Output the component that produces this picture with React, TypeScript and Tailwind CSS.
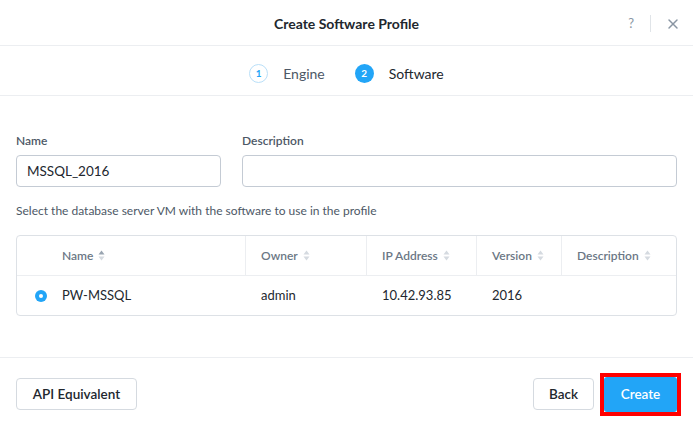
import { X } from "lucide-react";

const font = { fontFamily: "Lato, 'Open Sans', sans-serif" };

function SortIcon({ active }: { active?: boolean }) {
  return (
    <svg width="7" height="11" viewBox="0 0 7 11" className="ml-[5px]">
      <path d="M3.5 0.5 L6.5 4.5 H0.5 Z" fill={active ? "#9aa5b1" : "#d5dae0"} />
      <path d="M3.5 10.5 L6.5 6.5 H0.5 Z" fill="#d5dae0" />
    </svg>
  );
}

const cols = [
  { label: "Name", w: "w-[199px]", active: true },
  { label: "Owner", w: "w-[121px]" },
  { label: "IP Address", w: "w-[110px]" },
  { label: "Version", w: "w-[85px]" },
  { label: "Description", w: "flex-1", last: true },
];

export default function App() {
  return (
    <div className="w-[693px] h-[426px] bg-white flex flex-col text-[#22272e]" style={font}>
      {/* header */}
      <div className="h-[46px] border-b border-[#eceef1] flex items-center relative shrink-0">
        <div className="flex-1 text-center text-[14px] font-bold pt-[1px]">Create Software Profile</div>
        <div className="absolute right-[12px] top-[14px] flex items-center">
          <span className="text-[13px] text-[#8a96a3] mr-[16px]">?</span>
          <span className="w-px h-[17px] bg-[#e0e4e8] mr-[14px]" />
          <X size={16} strokeWidth={2.2} color="#8a96a3" />
        </div>
      </div>

      {/* steps */}
      <div className="h-[50px] border-b border-[#eceef1] flex items-center justify-center shrink-0 pt-[5px]">
        <div className="flex items-center">
          <span className="w-[19px] h-[19px] rounded-full border border-[#b9dff8] text-[#22a5f7] text-[10px] font-bold flex items-center justify-center">1</span>
          <span className="ml-[15px] text-[14px] text-[#4d5866]">Engine</span>
        </div>
        <div className="flex items-center ml-[30px]">
          <span className="w-[19px] h-[19px] rounded-full bg-[#22a5f7] text-white text-[10px] font-bold flex items-center justify-center">2</span>
          <span className="ml-[15px] text-[14px] text-[#22272e]">Software</span>
        </div>
      </div>

      {/* body */}
      <div className="flex-1 px-[16px] pt-[38px]">
        <div className="flex gap-[21px]">
          <div className="w-[205px] flex flex-col">
            <label className="text-[12px] font-semibold text-[#4d5866] leading-[14px]">Name</label>
            <div className="mt-[7px] h-[32px] border border-[#c4cbd4] rounded-[4px] px-[10px] flex items-center text-[13.5px]">MSSQL_2016</div>
          </div>
          <div className="flex-1 flex flex-col">
            <label className="text-[12px] font-semibold text-[#4d5866] leading-[14px]">Description</label>
            <div className="mt-[7px] h-[32px] border border-[#c4cbd4] rounded-[4px]" />
          </div>
        </div>
        <div className="mt-[17px] text-[12px] text-[#4d5866] leading-[14px]">Select the database server VM with the software to use in the profile</div>

        <div className="mt-[17px] border border-[#dde1e6] rounded-[4px]">
          <div className="h-[40px] flex border-b border-[#eceef1]">
            <div className="w-[30px]" />
            {cols.map((c) => (
              <div key={c.label} className={`${c.w} flex items-center pl-[15px] text-[12px] font-semibold text-[#6b7785] ${c.last ? "" : "border-r border-[#eceef1]"}`}>
                {c.label}
                <SortIcon active={c.active} />
              </div>
            ))}
          </div>
          <div className="h-[39px] flex items-center text-[13px]">
            <div className="w-[30px] flex justify-center pl-[18px]">
              <span className="w-[12px] h-[12px] rounded-full bg-[#22a5f7] flex items-center justify-center">
                <span className="w-[4px] h-[4px] rounded-full bg-white" />
              </span>
            </div>
            <div className="w-[199px] pl-[15px]">PW-MSSQL</div>
            <div className="w-[121px] pl-[15px]">admin</div>
            <div className="w-[110px] pl-[15px]">10.42.93.85</div>
            <div className="w-[85px] pl-[15px]">2016</div>
            <div className="flex-1" />
          </div>
        </div>
      </div>

      {/* footer */}
      <div className="h-[69px] border-t border-[#eceef1] flex items-center px-[16px] shrink-0 pt-[4px]">
        <button className="h-[32px] w-[121px] border border-[#d5dae0] rounded-[4px] text-[13.5px] font-semibold text-[#22272e]">API Equivalent</button>
        <div className="flex-1" />
        <button className="h-[32px] w-[61px] border border-[#d5dae0] rounded-[4px] text-[13.5px] font-semibold text-[#22272e]">Back</button>
        <div className="ml-[6px] mr-[-4px] border-[4px] border-[#ff0000]">
          <button className="h-[35px] w-[73px] bg-[#22a5f7] rounded-[3px] text-[13.5px] font-semibold text-white block">Create</button>
        </div>
      </div>
    </div>
  );
}
